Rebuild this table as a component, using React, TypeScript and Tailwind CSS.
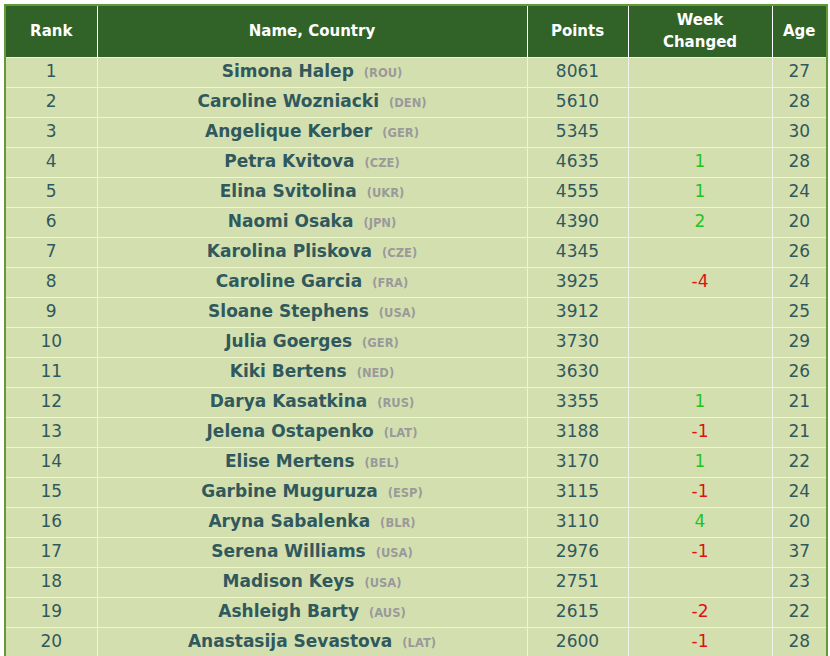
import React from "react";

interface Player {
  rank: number;
  name: string;
  country: string;
  points: number;
  change?: number;
  age: number;
}

const players: Player[] = [
  { rank: 1, name: "Simona Halep", country: "ROU", points: 8061, age: 27 },
  { rank: 2, name: "Caroline Wozniacki", country: "DEN", points: 5610, age: 28 },
  { rank: 3, name: "Angelique Kerber", country: "GER", points: 5345, age: 30 },
  { rank: 4, name: "Petra Kvitova", country: "CZE", points: 4635, change: 1, age: 28 },
  { rank: 5, name: "Elina Svitolina", country: "UKR", points: 4555, change: 1, age: 24 },
  { rank: 6, name: "Naomi Osaka", country: "JPN", points: 4390, change: 2, age: 20 },
  { rank: 7, name: "Karolina Pliskova", country: "CZE", points: 4345, age: 26 },
  { rank: 8, name: "Caroline Garcia", country: "FRA", points: 3925, change: -4, age: 24 },
  { rank: 9, name: "Sloane Stephens", country: "USA", points: 3912, age: 25 },
  { rank: 10, name: "Julia Goerges", country: "GER", points: 3730, age: 29 },
  { rank: 11, name: "Kiki Bertens", country: "NED", points: 3630, age: 26 },
  { rank: 12, name: "Darya Kasatkina", country: "RUS", points: 3355, change: 1, age: 21 },
  { rank: 13, name: "Jelena Ostapenko", country: "LAT", points: 3188, change: -1, age: 21 },
  { rank: 14, name: "Elise Mertens", country: "BEL", points: 3170, change: 1, age: 22 },
  { rank: 15, name: "Garbine Muguruza", country: "ESP", points: 3115, change: -1, age: 24 },
  { rank: 16, name: "Aryna Sabalenka", country: "BLR", points: 3110, change: 4, age: 20 },
  { rank: 17, name: "Serena Williams", country: "USA", points: 2976, change: -1, age: 37 },
  { rank: 18, name: "Madison Keys", country: "USA", points: 2751, age: 23 },
  { rank: 19, name: "Ashleigh Barty", country: "AUS", points: 2615, change: -2, age: 22 },
  { rank: 20, name: "Anastasija Sevastova", country: "LAT", points: 2600, change: -1, age: 28 },
];

const th = "border-x border-white p-0 text-[15px] font-bold text-white leading-[22px]";
const td = "border border-[#f0f0ec] p-0 h-[30px] text-center";

export default function App() {
  return (
    <div className="bg-white p-1 pr-[2px] font-['DejaVu_Sans',Verdana,sans-serif]">
      <table className="w-[824px] table-fixed border-collapse border-2 border-[#649a36] bg-[#d4dfb0] text-[17px] text-[#30595d]">
        <colgroup>
          <col className="w-[92px]" />
          <col className="w-[430px]" />
          <col className="w-[101px]" />
          <col className="w-[144px]" />
          <col />
        </colgroup>
        <thead>
          <tr className="h-[52px] bg-[#316228]">
            <th className={th}>Rank</th>
            <th className={th}>Name, Country</th>
            <th className={th}>Points</th>
            <th className={th}>
              Week
              <br />
              Changed
            </th>
            <th className={th}>Age</th>
          </tr>
        </thead>
        <tbody>
          {players.map((p) => (
            <tr key={p.rank}>
              <td className={td}>{p.rank}</td>
              <td className={td}>
                <span className="font-bold">{p.name}</span>
                <span className="ml-[10px] text-[11.5px] font-bold text-[#9a9a9a]">
                  ({p.country})
                </span>
              </td>
              <td className={td}>{p.points}</td>
              <td className={td}>
                {p.change !== undefined && (
                  <span className={p.change > 0 ? "text-[#1ec41e]" : "text-[#dd1111]"}>
                    {p.change}
                  </span>
                )}
              </td>
              <td className={td}>{p.age}</td>
            </tr>
          ))}
        </tbody>
      </table>
    </div>
  );
}
